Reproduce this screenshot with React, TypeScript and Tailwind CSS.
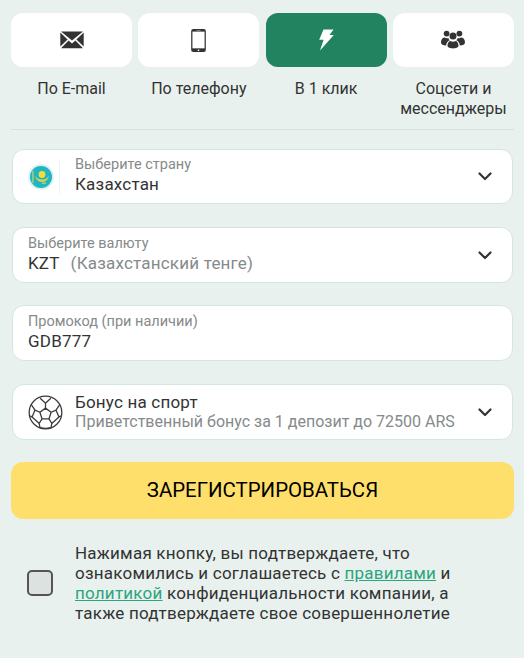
import React from 'react';

/* ── ICONS ──────────────────────────────────────────────────────────────── */

function MailIcon() {
  return (
    <svg width="24" height="18" viewBox="0 0 24 18" className="text-[#333]">
      <path fill="currentColor" d="M1 0.5h22L12 9.6 1 0.5zM0.3 1.6L7.6 8.6 0.3 15.6V1.6zM23.7 1.6V15.6L16.4 8.6l7.3-7zM8.6 9.5l3.4 2.9 3.4-2.9 7.6 7.7H1l7.6-7.7z" />
    </svg>
  );
}

function PhoneIcon() {
  return (
    <svg width="15" height="23" viewBox="0 0 14 22">
      <rect x="0" y="0" width="14" height="22" rx="2" fill="#333" />
      <rect x="1.200" y="2.500" width="11.600" height="16" fill="#fff" />
      <circle cx="7" cy="20.300" r="0.800" fill="#fff" />
      <rect x="5" y="1" width="4" height="0.700" fill="#999" />
    </svg>
  );
}

function BoltIcon() {
  return (
    <svg width="15" height="22" viewBox="0 0 15 22">
      <path fill="#fff" d="M4.500 0.500h10L10.500 6H14.800L1 21.500 4.600 10.800 0.200 10.800 4.500 0.500z" />
    </svg>
  );
}

function UsersIcon() {
  return (
    <svg width="24" height="20" viewBox="0 0 24 20" fill="#333">
      <circle cx="5.600" cy="3.600" r="2.900" />
      <circle cx="18.400" cy="3.600" r="2.900" />
      <circle cx="12" cy="6" r="3.500" />
      <path d="M0 12.400C0 9 2 7.400 3.600 7.400c1 .7 2.500 1 3.700.5.2 1 .7 1.800 1.400 2.400-2 .8-3.300 2.500-3.500 5.100C2.500 15.500 0 14.500 0 12.400z" />
      <path d="M24 12.400C24 9 22 7.400 20.400 7.400c-1 .7-2.500 1-3.700.5-.2 1-.7 1.800-1.400 2.400 2 .8 3.300 2.500 3.500 5.100C21.500 15.500 24 14.500 24 12.400z" />
      <path d="M6.500 15.800c0-2.800 1.700-4.800 3-4.800 1.500.9 3.500.9 5 0 1.300 0 3 2 3 4.800 0 3.500-11 3.500-11 0z" />
    </svg>
  );
}

function Chevron() {
  return (
    <svg width="14" height="9" viewBox="0 0 14 9" fill="none" stroke="#333" strokeWidth="2.200" strokeLinecap="round" strokeLinejoin="round" className="shrink-0">
      <path d="M1.500 1.500L7 7l5.500-5.500" />
    </svg>
  );
}

function KzFlag() {
  return (
    <svg width="26" height="26" viewBox="0 0 26 26" className="shrink-0">
      <circle cx="13" cy="13" r="12.800" fill="#dcefed" />
      <circle cx="13" cy="13" r="11" fill="#1fb5c4" />
      <circle cx="14" cy="10.500" r="3.400" fill="#f4dc3c" />
      <path d="M7 12c1 4 3.500 6 7 6s6-2 7-6c-2 2.500-4 3.500-7 3.500s-5-1-7-3.500z" fill="#d8cf4a" />
      <rect x="14" y="18.500" width="4" height="1.300" fill="#d8cf4a" />
      <rect x="4" y="7" width="1.800" height="12" fill="#8fc98a" />
    </svg>
  );
}

function SoccerBall() {
  return (
    <svg width="35" height="35" viewBox="0 0 36 36" fill="none" stroke="#3a3a3a" strokeWidth="1.300" strokeLinejoin="round" className="shrink-0">
      <circle cx="18" cy="18" r="16.800" />
      <path d="M18 13.500l5.800 4.200-2.200 6.800h-7.200l-2.200-6.800z" />
      <path d="M18 13.500V8.500l-5.500-5.200M18 8.500l5.500-5.200" />
      <path d="M23.800 17.700l5-2.200 4-5.800M28.800 15.500l3 7.200 2-1.200" />
      <path d="M12.200 17.700l-5-2.200-4-5.800M7.200 15.500l-3 7.200-2-1.200" />
      <path d="M14.400 24.500l-2.900 4.800.8 4.200M21.600 24.500l2.900 4.800-.8 4.200M11.500 29.300l-7.300-6.600M24.500 29.300l7.300-6.600M12.300 33.500c3.500 1 8 1 11.400 0" />
    </svg>
  );
}

/* ── PARTS ──────────────────────────────────────────────────────────────── */

const TABS = [
  { label: 'По E-mail', icon: <MailIcon /> },
  { label: 'По телефону', icon: <PhoneIcon /> },
  { label: 'В 1 клик', icon: <BoltIcon />, active: true },
  { label: 'Соцсети и мессенджеры', icon: <UsersIcon /> },
];

function Field({ children, chevron = true, className = '' }: { children: React.ReactNode; chevron?: boolean; className?: string }) {
  return (
    <div className={`flex h-[56px] items-center rounded-[12px] border border-[#d5e6e0] bg-white pl-[15px] pr-[20px] ${className}`}>
      <div className="flex min-w-0 flex-1 items-center">{children}</div>
      {chevron && <Chevron />}
    </div>
  );
}

/* ── APP ────────────────────────────────────────────────────────────────── */

export default function App() {
  return (
    <div className="h-[658px] w-[524px] overflow-hidden bg-[#e8f1ee] pl-[11px] pr-[10px] pt-[13px] font-['Roboto',sans-serif] text-[#333]">
      <div className="grid grid-cols-4 gap-x-[6.33px]">
        {TABS.map((tab) => (
          <div key={tab.label} className="flex flex-col items-center">
            <div className={`flex h-[54px] w-full items-center justify-center rounded-[12px] ${tab.active ? 'bg-[#21835f]' : 'bg-white'}`}>
              {tab.icon}
            </div>
            <div className="mt-[12px] h-[50px] text-center text-[16px] leading-[20px]">{tab.label}</div>
          </div>
        ))}
      </div>

      <div className="h-px bg-[#d3e2dd]" />

      <div className="mt-[19px] flex flex-col px-px">
        <Field className="!h-[55px]">
          <KzFlag />
          <div className="ml-[5px] h-[36px] w-px bg-[#f0f4f3]" />
          <div className="ml-[15px] pb-[2px]">
            <div className="text-[14.5px] leading-[18px] text-[#858a8b]">Выберите страну</div>
            <div className="text-[17px] leading-[21px] tracking-[0.2px]">Казахстан</div>
          </div>
        </Field>
        <Field className="mt-[23px]">
          <div className="pb-[2px]">
            <div className="text-[14.5px] leading-[18px] text-[#858a8b]">Выберите валюту</div>
            <div className="text-[17px] leading-[21px] tracking-[0.2px]">
              KZT<span className="ml-[11px] text-[#858a8b]">(Казахстанский тенге)</span>
            </div>
          </div>
        </Field>
        <Field chevron={false} className="mt-[22px]">
          <div className="pb-[2px]">
            <div className="text-[14.5px] leading-[18px] text-[#858a8b]">Промокод (при наличии)</div>
            <div className="text-[17px] leading-[21px] tracking-[0.2px]">GDB777</div>
          </div>
        </Field>
        <Field className="mt-[23px]">
          <SoccerBall />
          <div className="ml-[12px] min-w-0">
            <div className="text-[17px] leading-[19px] tracking-[0.2px]">Бонус на спорт</div>
            <div className="whitespace-nowrap text-[16px] leading-[19px] text-[#858a8b]">Приветственный бонус за 1 депозит до 72500 ARS</div>
          </div>
        </Field>
      </div>

      <button className="mt-[22px] flex h-[57px] w-full items-center justify-center rounded-[12px] bg-[#ffdf6b] text-[20.400px] text-black">
        ЗАРЕГИСТРИРОВАТЬСЯ
      </button>

      <div className="mt-[24px] flex items-center pl-[16px]">
        <div className="h-[26px] w-[26px] shrink-0 rounded-[5px] border-2 border-[#555] bg-[#dce2df]" />
        <p className="ml-[22px] w-[385px] text-[17px] leading-[20px] tracking-[0.22px]">
          Нажимая кнопку, вы подтверждаете, что ознакомились и соглашаетесь с{' '}
          <a className="text-[#2ba57e] underline">правилами</a> и{' '}
          <a className="text-[#2ba57e] underline">политикой</a> конфиденциальности компании, а также подтверждаете свое совершеннолетие
        </p>
      </div>
    </div>
  );
}
